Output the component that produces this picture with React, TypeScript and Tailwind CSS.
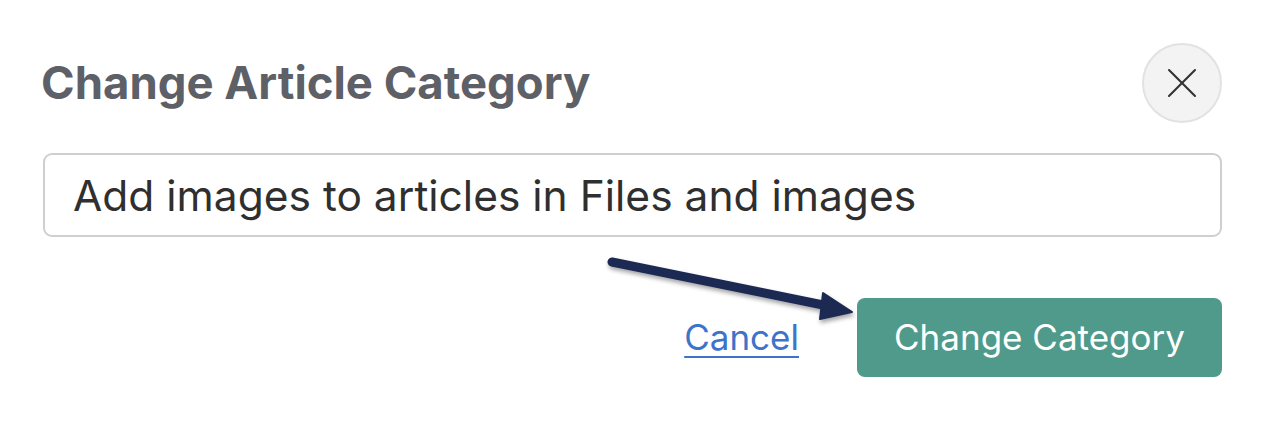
import { X } from "lucide-react";

const App = () => {
	return (
		<div className="relative w-[1265px] h-[425px] bg-white px-[43px] pt-[43px] font-['Inter','Liberation_Sans',sans-serif]">
			<div className="flex items-center justify-between">
				<h1 className="-ml-[2px] text-[45.5px] font-bold text-[#5e6067]">Change Article Category</h1>
				<button className="w-[80px] h-[80px] rounded-full bg-[#f3f3f3] border-2 border-[#e2e2e2] flex items-center justify-center text-[#333]">
					<X size={52} strokeWidth={0.95} />
				</button>
			</div>
			<input
				readOnly
				value="Add images to articles in Files and images"
				className="mt-[30px] w-full h-[84px] border-2 border-[#cfcfcf] rounded-[9px] px-[28px] text-[42.5px] text-[#2f2f2f] outline-none"
			/>
			<div className="mt-[61px] flex items-center justify-end gap-[58px]">
				<a href="#" className="text-[35px] text-[#3d74c9] underline underline-offset-[6px] decoration-2">Cancel</a>
				<button className="w-[365px] h-[79px] rounded-[8px] bg-[#4f9a8a] text-white text-[35px]">Change Category</button>
			</div>
			<svg className="absolute left-0 top-0 pointer-events-none" width="1265" height="425">
				<defs>
					<filter id="sh" x="-10%" y="-50%" width="120%" height="200%">
						<feDropShadow dx="1" dy="3" stdDeviation="2" floodColor="#000" floodOpacity="0.35" />
					</filter>
				</defs>
				<g filter="url(#sh)" fill="#1d2a52" stroke="#1d2a52">
					<line x1="612" y1="262" x2="828" y2="306" strokeWidth="9" strokeLinecap="round" />
					<polygon points="852,312 823,293 820,319" strokeWidth="2" strokeLinejoin="round" />
				</g>
			</svg>
		</div>
	);
};

export default App;
